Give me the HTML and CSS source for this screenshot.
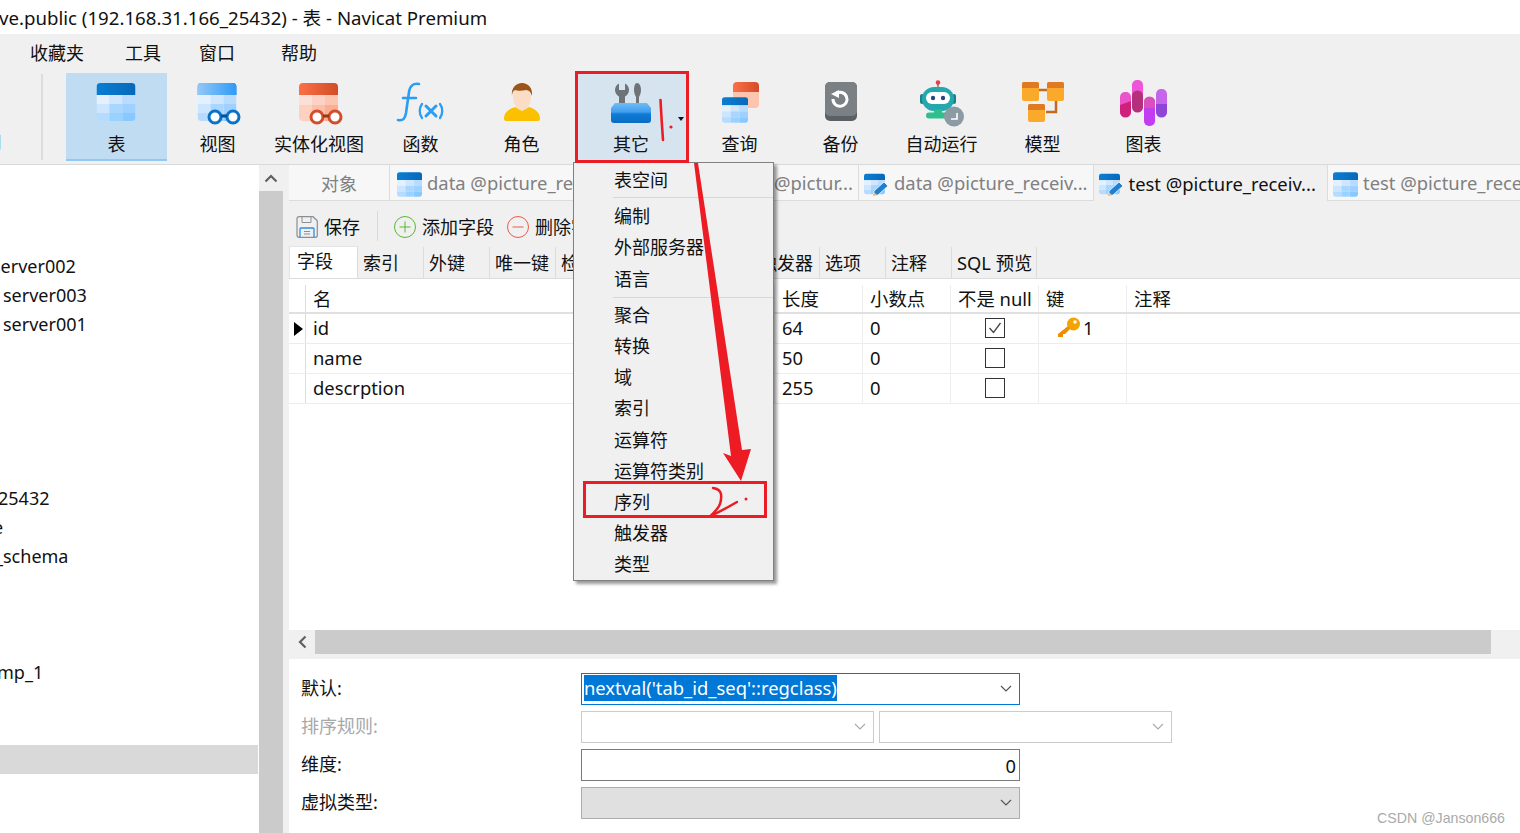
FILE: index.html
```html
<!DOCTYPE html>
<html lang="zh">
<head>
<meta charset="utf-8">
<title>Navicat Premium</title>
<link rel="stylesheet" href="styles.css">
</head>
<body>
<svg class="defs" width="0" height="0" aria-hidden="true">
  <defs>
    <linearGradient id="bandBlue" x1="0" x2="1" y1="0" y2="0"><stop offset="0" stop-color="#0a7ed4"/><stop offset="1" stop-color="#0868b8"/></linearGradient>
    <linearGradient id="bandLight" x1="0" x2="1" y1="0" y2="0"><stop offset="0" stop-color="#93c8f6"/><stop offset="1" stop-color="#2f9af6"/></linearGradient>
    <linearGradient id="bandRed" x1="0" x2="1" y1="0" y2="0"><stop offset="0" stop-color="#fb7048"/><stop offset="1" stop-color="#d14d28"/></linearGradient>
    <linearGradient id="boxBlue" x1="0" x2="0" y1="0" y2="1"><stop offset="0" stop-color="#6fbcf7"/><stop offset=".45" stop-color="#3f9fee"/><stop offset=".55" stop-color="#0f7bd6"/><stop offset="1" stop-color="#0a6cc2"/></linearGradient>
    <symbol id="tbl" viewBox="0 0 39 38">
      <path fill="url(#bandBlue)" d="M4 0h31a4 4 0 0 1 4 4v8H0V4a4 4 0 0 1 4-4z"/>
      <path fill="#e3f0fe" d="M0 12h13v9H0z"/><path fill="#cfe6fe" d="M13 12h13v9H13z"/><path fill="#b9dcfe" d="M26 12h13v9H26z"/>
      <path fill="#cde6ff" d="M0 21h13v9H0z"/><path fill="#a8d6ff" d="M13 21h13v9H13z"/><path fill="#9ed1ff" d="M26 21h13v9H26z"/>
      <path fill="#b5dcff" d="M0 30h13v8H4a4 4 0 0 1-4-4z"/><path fill="#99d1ff" d="M13 30h13v8H13z"/><path fill="#88c9ff" d="M26 30h13v4a4 4 0 0 1-4 4h-9z"/>
    </symbol>
    <symbol id="tblPen" viewBox="0 0 25 25">
      <use href="#tbl" x="0" y="0" width="21" height="24"/>
      <path d="M9 24l1-5 10-9 4 4-10 9z" fill="#1f7fd0" stroke="#fff" stroke-width=".8"/>
      <path d="M9 24l1-4 3 3z" fill="#e9b989"/>
    </symbol>
  </defs>
</svg>

<header class="titlebar"><span class="title-text">ve.public (192.168.31.166_25432) - 表 - Navicat Premium</span></header>

<nav class="menubar">
  <span class="menu-item m1">收藏夹</span>
  <span class="menu-item m2">工具</span>
  <span class="menu-item m3">窗口</span>
  <span class="menu-item m4">帮助</span>
</nav>

<section class="toolbar">
  <span class="clip-label">用</span>
  <span class="tool-sep"></span>
  <div class="tool tool-active">
    <svg class="ticon" viewBox="0 0 50 50"><use href="#tbl" x="4.500" y="2" width="39" height="38"/></svg>
    <span class="tool-label">表</span>
  </div>
  <div class="tool">
    <svg class="ticon" viewBox="0 0 50 50">
      <use href="#tbl" x="4.500" y="2" width="39" height="38"/>
      <path fill="url(#bandLight)" d="M8.500 2h31a4 4 0 0 1 4 4v8h-39V6a4 4 0 0 1 4-4z"/>
      <g fill="#fff" stroke="#0a72c8" stroke-width="3"><circle cx="22" cy="36" r="6"/><circle cx="40" cy="36" r="6"/></g>
      <path d="M28 35h6" stroke="#0a4f8c" stroke-width="3"/>
    </svg>
    <span class="tool-label">视图</span>
  </div>
  <div class="tool tool-wide">
    <svg class="ticon" viewBox="0 0 50 50">
      <path fill="url(#bandRed)" d="M9 2h31a4 4 0 0 1 4 4v8H5V6a4 4 0 0 1 4-4z"/>
      <path fill="#fbe0d8" d="M5 14h13v10H5z"/><path fill="#fcd2c4" d="M18 14h13v10H18z"/><path fill="#fdc4b0" d="M31 14h13v10H31z"/>
      <path fill="#fdd0c0" d="M5 24h13v16H9a4 4 0 0 1-4-4z"/><path fill="#fdbfa9" d="M18 24h13v16H18z"/><path fill="#fcae95" d="M31 24h13v12a4 4 0 0 1-4 4h-9z"/>
      <g fill="#fff" stroke="#d24e2a" stroke-width="3"><circle cx="23" cy="36" r="6"/><circle cx="41" cy="36" r="6"/></g>
      <path d="M29 35h6" stroke="#96361a" stroke-width="3"/>
    </svg>
    <span class="tool-label">实体化视图</span>
  </div>
  <div class="tool">
    <svg class="ticon" viewBox="0 0 50 50" fill="none" stroke="#2a9df4" stroke-linecap="round">
      <path stroke-width="2.600" d="M2 39c5 1 7-1 8-7l3-21c1-6 4-9 10-8M7 17h13"/>
      <path stroke-width="2.300" d="M26 23c-3 4-3 10 0 14M44 23c3 4 3 10 0 14"/>
      <path stroke-width="3" d="M30 25l10 10M40 25L30 35"/>
    </svg>
    <span class="tool-label">函数</span>
  </div>
  <div class="tool">
    <svg class="ticon" viewBox="0 0 50 50">
      <path fill="#fbc000" d="M7 38c0-7 5-10 11-12l7 4 7-4c6 2 11 5 11 12 0 1-1 2-2 2H9c-1 0-2-1-2-2z"/>
      <ellipse cx="25" cy="16" rx="9" ry="13" fill="#fbdcc4"/>
      <path fill="#9c5418" d="M15 15c-1-8 4-13 10-13s11 5 10 13c-1-4-3-6-6-6-4 1-9 1-11 0-2 1-3 3-3 6z"/>
    </svg>
    <span class="tool-label">角色</span>
  </div>
  <div class="tool tool-other">
    <svg class="ticon" viewBox="0 0 50 50">
      <path fill="#6d7377" d="M13 2.500V9h6V2.500c3 1.500 4 4 4 6.500 0 3-2 5.500-4 6.500V30h-6V15.500C11 14.500 9 12 9 9c0-2.500 1-5 4-6.500z"/>
      <path fill="#6d7377" d="M31 2c2.500 0 4 3 4 7 0 3-1 5-2 7v16h-3V16c-1-2-2-4-2-7 0-4 1-7 3-7z"/>
      <path fill="url(#boxBlue)" d="M9 22h32l4 5v12a3 3 0 0 1-3 3H8a3 3 0 0 1-3-3V27z"/>
    </svg>
    <span class="tool-label">其它</span>
    <span class="caret"></span>
  </div>
  <div class="tool">
    <svg class="ticon" viewBox="0 0 50 50">
      <path fill="url(#bandRed)" d="M22 1h18a4 4 0 0 1 4 4v6H18V5a4 4 0 0 1 4-4z"/>
      <path fill="#fdc4b0" d="M18 11h26v12a4 4 0 0 1-4 4H18z"/>
      <use href="#tbl" x="7" y="16" width="26" height="26"/>
    </svg>
    <span class="tool-label">查询</span>
  </div>
  <div class="tool">
    <svg class="ticon" viewBox="0 0 50 50">
      <rect x="9" y="1" width="32" height="39" rx="5" fill="#5a6064"/>
      <rect x="9" y="1" width="32" height="34" rx="5" fill="#7b8084"/>
      <path d="M20 12.500a7 7 0 1 1-3 5.500" fill="none" stroke="#fff" stroke-width="3"/>
      <path d="M15 13l8-4v8z" fill="#fff"/>
    </svg>
    <span class="tool-label">备份</span>
  </div>
  <div class="tool">
    <svg class="ticon" viewBox="0 0 50 50">
      <path d="M21 3v4" stroke="#5f7f86" stroke-width="1.500"/><circle cx="21" cy="1.500" r="2.300" fill="#e8404a"/>
      <rect x="3" y="13" width="4" height="10" rx="2" fill="#1d7f8f"/><rect x="35" y="13" width="4" height="10" rx="2" fill="#1d7f8f"/>
      <rect x="5" y="6" width="32" height="24" rx="12" fill="#23a9ad"/>
      <rect x="9" y="11" width="24" height="12" rx="6" fill="#fff"/>
      <circle cx="16" cy="17" r="2.200" fill="#24487c"/><circle cx="26" cy="17" r="2.200" fill="#24487c"/>
      <path d="M9 34.500a3 3 0 0 1 3-3h5v-3h8v3h6v6H12a3 3 0 0 1-3-3z" fill="#2dc08e"/>
      <circle cx="37" cy="35.500" r="10" fill="#8c9aa3"/>
      <path d="M40 32v6h-6" fill="none" stroke="#fff" stroke-width="1.600"/>
    </svg>
    <span class="tool-label">自动运行</span>
  </div>
  <div class="tool">
    <svg class="ticon" viewBox="0 0 50 50">
      <path d="M20 9h10M38 17v14H28" fill="none" stroke="#c46a1e" stroke-width="2.500"/>
      <rect x="4" y="1" width="17" height="19" rx="2" fill="#fba92a"/><path d="M4 3a2 2 0 0 1 2-2h13a2 2 0 0 1 2 2v4H4z" fill="#df7a22"/>
      <rect x="29" y="1" width="17" height="19" rx="2" fill="#fba92a"/><path d="M29 3a2 2 0 0 1 2-2h13a2 2 0 0 1 2 2v4H29z" fill="#df7a22"/>
      <rect x="10" y="23" width="17" height="18" rx="2" fill="#fba92a"/><path d="M10 25a2 2 0 0 1 2-2h13a2 2 0 0 1 2 2v4H10z" fill="#df7a22"/>
    </svg>
    <span class="tool-label">模型</span>
  </div>
  <div class="tool">
    <svg class="ticon" viewBox="0 0 50 50">
      <rect x="1" y="11" width="11" height="25" rx="5" fill="#ec53cb"/><path d="M1 24l11-4v11a5 5 0 0 1-11 0z" fill="#d0217a"/>
      <rect x="13" y="-1" width="11" height="32" rx="5" fill="#ef55d8"/><path d="M13 15a5.500 5.500 0 0 1 11 0v11a5 5 0 0 1-11 0z" fill="#b42f7c"/>
      <rect x="25" y="16" width="11" height="29" rx="5" fill="#c23cf0"/><path d="M25 21a5.500 5.500 0 0 1 11 0v6H25z" fill="#d94fbb"/>
      <rect x="37" y="8" width="11" height="28" rx="5" fill="#c566ea"/><path d="M37 23h11v8a5 5 0 0 1-11 0z" fill="#8f46d6"/>
    </svg>
    <span class="tool-label">图表</span>
  </div>
</section>

<main class="main">
  <aside class="sidebar">
    <div class="tree">
      <div class="tree-row"></div>
      <div class="tree-row"><span class="n-a">server002</span></div>
      <div class="tree-row"><span class="n-b">server003</span></div>
      <div class="tree-row"><span class="n-b">server001</span></div>
      <div class="tree-row"></div><div class="tree-row"></div><div class="tree-row"></div><div class="tree-row"></div>
      <div class="tree-row"></div>
      <div class="tree-row"><span class="n-c">25432</span></div>
      <div class="tree-row"><span class="n-d">e</span></div>
      <div class="tree-row"><span class="n-e">_schema</span></div>
      <div class="tree-row"></div><div class="tree-row"></div><div class="tree-row"></div>
      <div class="tree-row"><span class="n-f">mp_1</span></div>
      <div class="tree-row"></div><div class="tree-row"></div>
      <div class="tree-row tree-selected"></div>
    </div>
  </aside>
  <div class="vscroll"><div class="vscroll-up"><svg width="14" height="9" viewBox="0 0 14 9"><path d="M1.500 7.500L7 2l5.500 5.500" fill="none" stroke="#606060" stroke-width="2.200"/></svg></div></div>
  <div class="gutter"></div>

  <section class="content">
    <div class="tabs">
      <div class="tab tab-object">对象</div>
      <div class="tab tab-first"><svg class="tab-icon"><use href="#tbl" width="25" height="25"/></svg><span class="tab-text">data @picture_receiv...</span></div>
      <div class="tab"><svg class="tab-icon"><use href="#tbl" width="25" height="25"/></svg><span class="tab-text">data_backup @pictur...</span></div>
      <div class="tab"><svg class="tab-icon"><use href="#tblPen" width="25" height="25"/></svg><span class="tab-text">data @picture_receiv...</span></div>
      <div class="tab tab-active"><svg class="tab-icon"><use href="#tblPen" width="25" height="25"/></svg><span class="tab-text">test @picture_receiv...</span></div>
      <div class="tab"><svg class="tab-icon"><use href="#tbl" width="25" height="25"/></svg><span class="tab-text">test @picture_receiv...</span></div>
    </div>

    <div class="actions">
      <svg class="act-icon" viewBox="0 0 22 22" fill="none">
        <path d="M3 .7h14l4.300 4v14.600a2 2 0 0 1-2 2H3a2 2 0 0 1-2-2V2.700a2 2 0 0 1 2-2z" stroke="#8a8f94" stroke-width="1.200"/>
        <path d="M6 1v5.500h9V1" stroke="#8a8f94"/>
        <path d="M4 21v-8a1 1 0 0 1 1-1h12a1 1 0 0 1 1 1v8" stroke="#2e8ee0" stroke-width="1.300"/>
        <path d="M8 15.500h6M8 18h6" stroke="#8a8f94"/>
      </svg>
      <span class="act-text">保存</span>
      <span class="act-sep"></span>
      <svg class="act-icon" viewBox="0 0 22 22" fill="none" stroke="#5ab82e"><circle cx="11" cy="11" r="10.500"/><path d="M5.500 11h11M11 5.500v11"/></svg>
      <span class="act-text">添加字段</span>
      <svg class="act-icon act-del" viewBox="0 0 22 22" fill="none" stroke="#ee5a4f"><circle cx="11" cy="11" r="10.500"/><path d="M5.500 11h11"/></svg>
      <span class="act-text">删除字段</span>
    </div>

    <div class="subtabs">
      <span class="subtab subtab-active">字段</span>
      <span class="subtab">索引</span>
      <span class="subtab">外键</span>
      <span class="subtab">唯一键</span>
      <span class="subtab">检查</span>
      <span class="subtab">排除</span>
      <span class="subtab">规则</span>
      <span class="subtab">触发器</span>
      <span class="subtab">选项</span>
      <span class="subtab">注释</span>
      <span class="subtab subtab-sql">SQL 预览</span>
    </div>

    <div class="grid-wrap">
      <div class="grid-row grid-head">
        <span class="cell"></span><span class="cell">名</span><span class="cell">类型</span><span class="cell">长度</span><span class="cell">小数点</span><span class="cell">不是 null</span><span class="cell">键</span><span class="cell">注释</span>
      </div>
      <div class="grid-row">
        <span class="cell cell-mark"><i class="marker"></i></span><span class="cell">id</span><span class="cell">varchar</span><span class="cell">64</span><span class="cell">0</span>
        <span class="cell cell-center"><span class="check"><svg width="18" height="18" viewBox="0 0 18 18"><path d="M3.500 9l4 4.500L14.500 4" fill="none" stroke="#444" stroke-width="1.300"/></svg></span></span>
        <span class="cell cell-key"><svg class="key" viewBox="0 0 24 21"><circle cx="16.500" cy="7" r="6.500" fill="#f5a300"/><circle cx="18" cy="5" r="1.800" fill="#fff"/><path d="M11 9L1 17v3h5v-3h2l5-5z" fill="#f08c00"/></svg>1</span>
        <span class="cell"></span>
      </div>
      <div class="grid-row">
        <span class="cell cell-mark"></span><span class="cell">name</span><span class="cell">varchar</span><span class="cell">50</span><span class="cell">0</span>
        <span class="cell cell-center"><span class="check"></span></span><span class="cell"></span><span class="cell"></span>
      </div>
      <div class="grid-row">
        <span class="cell cell-mark"></span><span class="cell">descrption</span><span class="cell">varchar</span><span class="cell">255</span><span class="cell">0</span>
        <span class="cell cell-center"><span class="check"></span></span><span class="cell"></span><span class="cell"></span>
      </div>
    </div>

    <div class="hscroll">
      <span class="hscroll-btn"><svg width="9" height="14" viewBox="0 0 9 14"><path d="M7.500 1.500L2 7l5.500 5.500" fill="none" stroke="#606060" stroke-width="2.200"/></svg></span>
      <span class="hscroll-thumb"></span>
    </div>

    <div class="form">
      <label class="f-label">默认:</label>
      <div class="field field-focus"><span class="selected">nextval('tab_id_seq'::regclass)</span><svg class="chev" viewBox="0 0 12 8"><path d="M1 1l5 5 5-5" fill="none" stroke="#555" stroke-width="1.200"/></svg></div>
      <label class="f-label f-disabled">排序规则:</label>
      <div class="field-pair">
        <div class="field field-disabled"><svg class="chev" viewBox="0 0 12 8"><path d="M1 1l5 5 5-5" fill="none" stroke="#aaa" stroke-width="1.200"/></svg></div>
        <div class="field field-disabled"><svg class="chev" viewBox="0 0 12 8"><path d="M1 1l5 5 5-5" fill="none" stroke="#aaa" stroke-width="1.200"/></svg></div>
      </div>
      <label class="f-label">维度:</label>
      <div class="field field-num">0</div>
      <label class="f-label">虚拟类型:</label>
      <div class="field field-grey"><svg class="chev" viewBox="0 0 12 8"><path d="M1 1l5 5 5-5" fill="none" stroke="#555" stroke-width="1.200"/></svg></div>
    </div>
  </section>
</main>

<div class="dropdown">
  <div class="dd-item">表空间</div>
  <div class="dd-sep"></div>
  <div class="dd-item">编制</div>
  <div class="dd-item">外部服务器</div>
  <div class="dd-item">语言</div>
  <div class="dd-sep dd-sep-low"></div>
  <div class="dd-item">聚合</div>
  <div class="dd-item">转换</div>
  <div class="dd-item">域</div>
  <div class="dd-item">索引</div>
  <div class="dd-item">运算符</div>
  <div class="dd-item">运算符类别</div>
  <div class="dd-item">序列</div>
  <div class="dd-item">触发器</div>
  <div class="dd-item">类型</div>
</div>

<div class="mark-box mark-other"></div>
<div class="mark-box mark-seq"></div>
<svg class="ink" viewBox="0 0 1520 833" aria-hidden="true">
  <path fill="#ed1c24" d="M694 163h4l44 287 9-1-10 32-18-28 8 3z"/>
  <path d="M660.500 100q1 20 2.500 40" fill="none" stroke="#ed1c24" stroke-width="2.600" stroke-linecap="round"/>
  <circle cx="671" cy="127" r="1.600" fill="#ed1c24"/>
  <path d="M713 488q7 1 8 6 1 9-4 15t-8 8q14-7 28-15" fill="none" stroke="#ed1c24" stroke-width="2.500" stroke-linecap="round"/>
  <circle cx="746" cy="499" r="1.500" fill="#ed1c24"/>
</svg>
<div class="watermark">CSDN @Janson666</div>
</body>
</html>
```
FILE: styles.css
```css
* { box-sizing: border-box; }
html, body { margin: 0; height: 833px; overflow: hidden; }
body {
  position: relative;
  width: 1520px;
  background: #fff;
  color: #111;
  font-family: "Noto Sans", "Noto Sans CJK SC", sans-serif;
  font-size: 18px;
  display: flex;
  flex-direction: column;
}
.defs { position: absolute; }

.titlebar { height: 34px; flex: none; background: #fff; display: flex; align-items: center; overflow: hidden; white-space: nowrap; font-size: 18.650px; padding-bottom: 2px; }
.title-text { margin-left: -1px; }

.menubar { height: 39px; flex: none; background: #f0f0f0; display: flex; align-items: center; padding-bottom: 4px; }
.menu-item { flex: none; }
.m1 { margin-left: 30px; }
.m2 { margin-left: 41px; }
.m3 { margin-left: 38px; }
.m4 { margin-left: 46px; }

.toolbar { height: 92px; flex: none; background: #f0f0f0; display: flex; border-bottom: 1px solid #d9d9d9; position: relative; padding-bottom: 3px; overflow: hidden; }
.clip-label { width: 2px; flex: none; overflow: hidden; direction: rtl; line-height: 20px; padding-top: 59px; }
.tool-sep { width: 2px; margin: 1px 23px 1px 39px; background: #dcdcdc; flex: none; height: 86px; }
.tool { width: 101px; flex: none; display: flex; flex-direction: column; align-items: center; padding-top: 8px; position: relative; }
.tool-wide { width: 102px; }
.tool-active { background: #bfdcf2; border-bottom: 2px solid #90c8f6; }
.tool-other { background: #d6e4f0; margin-left: 3px; width: 114px; padding-right: 2px; }
.ticon { width: 50px; height: 50px; display: block; flex: none; overflow: visible; }
.tool-label { line-height: 26px; white-space: nowrap; }
.caret { position: absolute; left: 103px; top: 44px; border: 3px solid transparent; border-top: 4px solid #111; border-bottom: 0; }

.main { flex: 1; min-height: 0; display: flex; }
.sidebar { width: 259px; flex: none; overflow: hidden; padding-top: 58px; }
.tree-row { height: 29px; line-height: 29px; white-space: nowrap; overflow: hidden; width: 258px; }
.tree-selected { background: #d9d9d9; }
.n-a { margin-left: -8px; }
.n-b { margin-left: 3px; }
.n-c { margin-left: -2px; }
.n-d { margin-left: -7px; }
.n-e { margin-left: -5px; }
.n-f { margin-left: -3px; }

.vscroll { width: 24px; flex: none; background: #cbcbcb; }
.vscroll-up { height: 26px; background: #f0f0f0; display: flex; align-items: center; justify-content: center; }
.gutter { width: 6px; flex: none; background: #f0f0f0; }

.content { flex: 1; min-width: 0; display: flex; flex-direction: column; overflow: hidden; }

.tabs { height: 36px; flex: none; display: flex; background: #f7f7f7; border-bottom: 1px solid #dcdcdc; color: #808080; font-size: 18.400px; }
.tab { width: 234.500px; flex: none; display: flex; align-items: center; padding-left: 5px; gap: 5px; border-right: 1px solid #dcdcdc; white-space: nowrap; overflow: hidden; }
.tab-first { padding-left: 7px; }
.tab-object { width: 101px; justify-content: center; padding-left: 0; font-size: 18px; }
.tab-active { background: #f0f0f0; color: #111; margin-bottom: -1px; }
.tab-icon { width: 25px; height: 25px; flex: none; margin-top: 3px; }
.tab-text { flex: none; }

.actions { height: 46px; flex: none; background: #f0f0f0; display: flex; align-items: center; padding-left: 7px; padding-top: 4px; white-space: nowrap; }
.act-icon { width: 22px; height: 22px; flex: none; margin-top: 2px; }
.act-text { margin-left: 6px; }
.act-sep { width: 1px; height: 30px; background: #d9d9d9; margin: 0 16px 0 17px; }
.act-del { margin-left: 13px; }

.subtabs { height: 32px; flex: none; background: #f0f0f0; display: flex; border-bottom: 1px solid #dcdcdc; }
.subtab { width: 66px; flex: none; padding-left: 5px; line-height: 32px; border-right: 1px solid #dcdcdc; white-space: nowrap; overflow: hidden; }
.subtab-active { width: 69px; padding-left: 7px; background: #fff; margin-top: -1px; height: 32px; border-top: 1px solid #e4e4e4; border-left: 1px solid #e4e4e4; line-height: 28px; }
.subtab-sql { width: 85px; font-size: 18.300px; }

.grid-wrap { flex: 1; min-height: 0; background: #fff; padding-top: 6px; font-size: 18.400px; }
.grid-row { display: grid; grid-template-columns: 16px 280px 189px 88px 88px 88px 88px 1fr; height: 30px; border-bottom: 1px solid #ececec; }
.grid-head { height: 29px; border-bottom: 2px solid #e0e0e0; }
.cell { display: flex; align-items: center; padding-left: 7px; padding-bottom: 2px; border-left: 1px solid #eeeeee; white-space: nowrap; overflow: hidden; }
.cell:first-child { border-left: 0; padding-left: 0; }
.grid-row .cell:nth-child(2) { border-left-color: #dcdcdc; }
.cell.cell-mark { padding: 0 0 0 5px; }
.marker { width: 0; height: 0; border-left: 9px solid #000; border-top: 7px solid transparent; border-bottom: 7px solid transparent; }
.cell-center { justify-content: center; padding-left: 0; }
.check { width: 20px; height: 20px; border: 1px solid #333; display: flex; align-items: center; justify-content: center; background: #fff; }
.cell-key { padding-left: 18px; gap: 2px; }
.key { width: 24px; height: 21px; flex: none; }

.hscroll { height: 29px; flex: none; background: #f0f0f0; display: flex; padding-bottom: 5px; }
.hscroll-btn { width: 26px; flex: none; display: flex; align-items: center; padding-left: 9px; }
.hscroll-thumb { width: 1176px; flex: none; background: #cbcbcb; }

.form { height: 174px; flex: none; background: #fff; display: grid; grid-template-columns: 292px 1fr; grid-auto-rows: 32px; row-gap: 6px; padding-top: 14px; align-items: stretch; }
.f-label { padding-left: 12px; line-height: 30px; }
.f-disabled { color: #a8a8a8; }
.field { width: 439px; border: 1px solid #7a7a7a; background: #fff; display: flex; align-items: center; position: relative; white-space: nowrap; font-size: 18.300px; }
.field-focus { border-color: #0078d7; padding-left: 2px; padding-bottom: 2px; font-size: 18.400px; }
.selected { background: #0078d7; color: #fff; line-height: 26px; }
.field-pair { display: flex; gap: 5px; }
.field-disabled { width: 293px; border-color: #cccccc; }
.field-num { justify-content: flex-end; padding-right: 3px; }
.field-grey { background: #e0e0e0; border-color: #adadad; }
.chev { position: absolute; right: 7px; top: 11px; width: 12px; height: 8px; }

.dropdown { position: absolute; left: 573px; top: 162px; width: 201px; height: 419px; background: #f0f0f0; border: 1px solid #808080; box-shadow: 3px 3px 3px rgba(0,0,0,.4); padding: 2px 0 0 40px; }
.dd-item { height: 31.200px; line-height: 31px; white-space: nowrap; }
.dd-sep { height: 1px; background: #d8d8d8; margin: 1px 0 3px -1px; }
.dd-sep-low { margin: 2px 0 2px -1px; }

.mark-box { position: absolute; border: 3px solid #ed1c24; }
.mark-other { left: 575px; top: 71px; width: 114px; height: 92px; }
.mark-seq { left: 583px; top: 481px; width: 184px; height: 37px; }
.ink { position: absolute; left: 0; top: 0; width: 1520px; height: 833px; pointer-events: none; }
.watermark { position: absolute; right: 15px; top: 809px; font-family: "Liberation Sans", sans-serif; font-size: 14.200px; line-height: 18px; color: #aaaaaa; }
```
